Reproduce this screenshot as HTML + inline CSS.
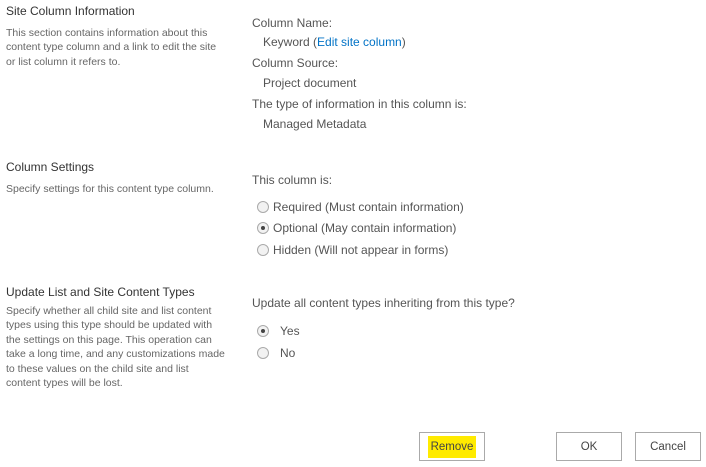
<!DOCTYPE html><html><head><style>
body{margin:0;width:706px;height:467px;background:#fff;font-family:"Liberation Sans",sans-serif;position:relative;overflow:hidden}
.t{position:absolute;white-space:nowrap;line-height:14px}
.h{font-size:12px;color:#333}
.d{font-size:10.5px;color:#666;line-height:14.4px}
.r{font-size:12px;color:#555}
.a{color:#0072c6}
.rad{position:absolute;width:10px;height:10px;border:1px solid #aaa;border-radius:50%;background:#f2f2f2}
.rad.on::after{content:"";position:absolute;left:3px;top:3px;width:4px;height:4px;border-radius:50%;background:#444}
.b{position:absolute;top:432px;height:29px;width:64px;border:1px solid #aaa;background:#fff;font-size:11.5px;color:#444;text-align:center;line-height:29px;box-sizing:border-box}
</style></head><body>
<div class="t h" style="left:6px;top:4px">Site Column Information</div>
<div class="t d" style="left:6px;top:26px">This section contains information about this<br>content type column and a link to edit the site<br>or list column it refers to.</div>
<div class="t r" style="left:252px;top:16px">Column Name:</div>
<div class="t r" style="left:263px;top:35px">Keyword (<span class="a">Edit site column</span>)</div>
<div class="t r" style="left:252px;top:56px">Column Source:</div>
<div class="t r" style="left:263px;top:76px">Project document</div>
<div class="t r" style="left:252px;top:97px">The type of information in this column is:</div>
<div class="t r" style="left:263px;top:117px">Managed Metadata</div>

<div class="t h" style="left:6px;top:160px">Column Settings</div>
<div class="t d" style="left:6px;top:182px">Specify settings for this content type column.</div>
<div class="t r" style="left:252px;top:173px">This column is:</div>
<div class="rad" style="left:257px;top:201px"></div><div class="t r" style="left:273px;top:200px">Required (Must contain information)</div>
<div class="rad on" style="left:257px;top:222px"></div><div class="t r" style="left:273px;top:221px">Optional (May contain information)</div>
<div class="rad" style="left:257px;top:244px"></div><div class="t r" style="left:273px;top:243px">Hidden (Will not appear in forms)</div>

<div class="t h" style="left:6px;top:285px">Update List and Site Content Types</div>
<div class="t d" style="left:6px;top:304px">Specify whether all child site and list content<br>types using this type should be updated with<br>the settings on this page. This operation can<br>take a long time, and any customizations made<br>to these values on the child site and list<br>content types will be lost.</div>
<div class="t r" style="left:252px;top:296px">Update all content types inheriting from this type?</div>
<div class="rad on" style="left:257px;top:325px"></div><div class="t r" style="left:280px;top:324px">Yes</div>
<div class="rad" style="left:257px;top:347px"></div><div class="t r" style="left:280px;top:346px">No</div>

<div class="b" style="left:419px;width:66px"><span style="background:#ffeb00;padding:5px 3px">Remove</span></div>
<div class="b" style="left:556px;width:66px">OK</div>
<div class="b" style="left:635px;width:66px">Cancel</div>
</body></html>
